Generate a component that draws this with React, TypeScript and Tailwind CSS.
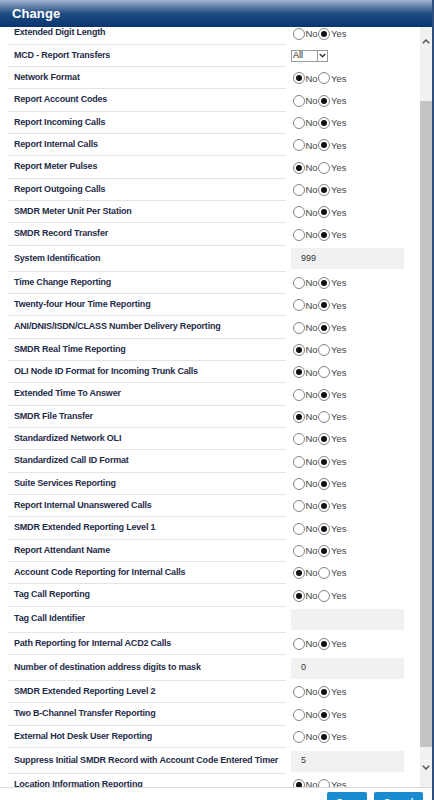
import React from "react";

type Row =
  | { label: string; kind: "radio"; value: "No" | "Yes" }
  | { label: string; kind: "input"; value: string }
  | { label: string; kind: "select"; value: string };

const rows: Row[] = [
  { label: "Extended Digit Length", kind: "radio", value: "Yes" },
  { label: "MCD - Report Transfers", kind: "select", value: "All" },
  { label: "Network Format", kind: "radio", value: "No" },
  { label: "Report Account Codes", kind: "radio", value: "Yes" },
  { label: "Report Incoming Calls", kind: "radio", value: "Yes" },
  { label: "Report Internal Calls", kind: "radio", value: "Yes" },
  { label: "Report Meter Pulses", kind: "radio", value: "No" },
  { label: "Report Outgoing Calls", kind: "radio", value: "Yes" },
  { label: "SMDR Meter Unit Per Station", kind: "radio", value: "Yes" },
  { label: "SMDR Record Transfer", kind: "radio", value: "Yes" },
  { label: "System Identification", kind: "input", value: "999" },
  { label: "Time Change Reporting", kind: "radio", value: "Yes" },
  { label: "Twenty-four Hour Time Reporting", kind: "radio", value: "Yes" },
  { label: "ANI/DNIS/ISDN/CLASS Number Delivery Reporting", kind: "radio", value: "Yes" },
  { label: "SMDR Real Time Reporting", kind: "radio", value: "No" },
  { label: "OLI Node ID Format for Incoming Trunk Calls", kind: "radio", value: "No" },
  { label: "Extended Time To Answer", kind: "radio", value: "Yes" },
  { label: "SMDR File Transfer", kind: "radio", value: "No" },
  { label: "Standardized Network OLI", kind: "radio", value: "Yes" },
  { label: "Standardized Call ID Format", kind: "radio", value: "Yes" },
  { label: "Suite Services Reporting", kind: "radio", value: "Yes" },
  { label: "Report Internal Unanswered Calls", kind: "radio", value: "Yes" },
  { label: "SMDR Extended Reporting Level 1", kind: "radio", value: "Yes" },
  { label: "Report Attendant Name", kind: "radio", value: "Yes" },
  { label: "Account Code Reporting for Internal Calls", kind: "radio", value: "No" },
  { label: "Tag Call Reporting", kind: "radio", value: "No" },
  { label: "Tag Call Identifier", kind: "input", value: "" },
  { label: "Path Reporting for Internal ACD2 Calls", kind: "radio", value: "Yes" },
  { label: "Number of destination address digits to mask", kind: "input", value: "0" },
  { label: "SMDR Extended Reporting Level 2", kind: "radio", value: "Yes" },
  { label: "Two B-Channel Transfer Reporting", kind: "radio", value: "Yes" },
  { label: "External Hot Desk User Reporting", kind: "radio", value: "Yes" },
  { label: "Suppress Initial SMDR Record with Account Code Entered Timer", kind: "input", value: "5" },
  { label: "Location Information Reporting", kind: "radio", value: "No" },
];

function Radio({ checked }: { checked: boolean }) {
  return (
    <span className="w-[12px] h-[12px] rounded-full border border-[#858585] bg-white flex items-center justify-center shrink-0">
      {checked && <span className="w-[6px] h-[6px] rounded-full bg-[#111]" />}
    </span>
  );
}

function RadioGroup({ value }: { value: "No" | "Yes" }) {
  return (
    <div className="flex items-center text-[9.5px] text-[#444] leading-none ml-[2px]">
      <Radio checked={value === "No"} />
      <span className="w-[13px] pl-[0.5px]">No</span>
      <Radio checked={value === "Yes"} />
      <span className="ml-[1px]">Yes</span>
    </div>
  );
}

function Select({ value }: { value: string }) {
  return (
    <div className="flex items-stretch w-[37px] h-[12px] border border-[#9a9a9a] bg-white text-[9px] text-[#222] leading-none">
      <span className="flex-1 pl-[1px] flex items-center">{value}</span>
      <span className="w-[10px] border-l border-[#9a9a9a] flex items-center justify-center">
        <svg width="7" height="5" viewBox="0 0 7 5">
          <path d="M0.8 1 L3.5 3.8 L6.2 1" fill="none" stroke="#333" strokeWidth="1.3" />
        </svg>
      </span>
    </div>
  );
}

function FormRow({ row }: { row: Row }) {
  const isInput = row.kind === "input";
  return (
    <div className={`flex items-stretch pl-[8px] ${isInput ? "h-[26px]" : "h-[22.33px]"}`}>
      <div className="w-[278px] border-b border-[#e4e4e4] pl-[6px] flex items-center text-[9px] font-bold text-[#1f2c49] tracking-[-0.2px] whitespace-nowrap">
        {row.label}
      </div>
      <div className="flex-1 flex items-center pl-[5px]">
        {row.kind === "radio" && <RadioGroup value={row.value} />}
        {row.kind === "select" && <Select value={row.value} />}
        {row.kind === "input" && (
          <div className="w-[113px] h-[21px] bg-[#f1f1f1] flex items-center pl-[10px] text-[9px] text-[#333]">
            {row.value}
          </div>
        )}
      </div>
    </div>
  );
}

export default function App() {
  return (
    <div
      className="w-[434px] h-[800px] overflow-hidden flex flex-col bg-white border-r-2 border-[#2c4f7f]"
      style={{ fontFamily: '"Liberation Sans", Arial, sans-serif' }}
    >
      <div className="h-[27px] shrink-0 bg-gradient-to-b from-[#a3b5cd] via-[#1f4b82] to-[#083570] flex items-center pl-[12px]">
        <span className="text-white font-bold text-[13px] tracking-[0.1px]">Change</span>
      </div>
      <div className="flex-1 min-h-0 flex">
        <div className="flex-1 overflow-hidden">
          <div className="-mt-[4.5px]">
            {rows.map((r) => (
              <FormRow key={r.label} row={r} />
            ))}
          </div>
        </div>
        <div className="w-[12px] bg-[#f1f1f1] flex flex-col items-center">
          <div className="h-[28px] flex items-center justify-center">
            <svg width="8" height="5" viewBox="0 0 8 5">
              <path d="M0.8 4.2 L4 1 L7.2 4.2" fill="none" stroke="#555" strokeWidth="1.5" />
            </svg>
          </div>
          <div className="h-[46px]" />
          <div className="w-[12px] h-[646px] bg-[#c4c4c4]" />
          <div className="flex-1 flex items-center justify-center">
            <svg width="8" height="5" viewBox="0 0 8 5">
              <path d="M0.8 0.8 L4 4 L7.2 0.8" fill="none" stroke="#555" strokeWidth="1.5" />
            </svg>
          </div>
        </div>
      </div>
      <div className="h-[13px] shrink-0 border-t border-[#d9d9d9] bg-white flex justify-end gap-[7px] pr-[9px] pt-[4px] overflow-hidden">
        <div className="w-[40px] h-[20px] rounded-[2px] bg-[#1b8bd0] text-white text-[9px] font-bold flex justify-center pt-[4px]">
          Save
        </div>
        <div className="w-[49px] h-[20px] rounded-[2px] bg-[#1b8bd0] text-white text-[9px] font-bold flex justify-center pt-[4px]">
          Cancel
        </div>
      </div>
    </div>
  );
}
